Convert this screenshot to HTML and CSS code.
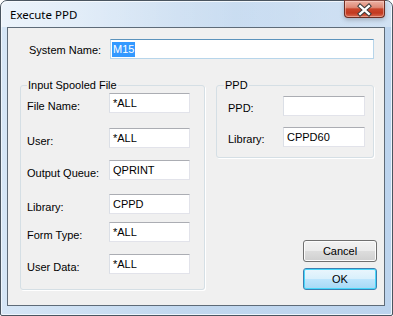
FILE: index.html
```html
<!DOCTYPE html>
<html>
<head>
<meta charset="utf-8">
<title>Execute PPD</title>
<link rel="stylesheet" href="styles.css">
</head>
<body>
<div class="window">
  <div class="titlebar">
    <span class="title">Execute PPD</span>
    <div class="close">
      <svg width="40" height="17" viewBox="0 0 40 17">
        <path d="M15.5 5 L24.5 13 M24.5 5 L15.5 13" stroke="#3a3a3a" stroke-width="4.4" stroke-linecap="square" fill="none"/>
        <path d="M15.5 5 L24.5 13 M24.5 5 L15.5 13" stroke="#ffffff" stroke-width="2.4" stroke-linecap="square" fill="none"/>
      </svg>
    </div>
  </div>
  <div class="client">
    <div class="sysrow">
      <span class="lbl sys-lbl">System Name:</span>
      <div class="input sys-input"><span class="sel">M15</span></div>
    </div>
    <div class="main">
      <fieldset class="group left-group">
        <legend>Input Spooled File</legend>
        <div class="row r1"><span class="lbl">File Name:</span><div class="input">*ALL</div></div>
        <div class="row r2"><span class="lbl">User:</span><div class="input">*ALL</div></div>
        <div class="row r3"><span class="lbl">Output Queue:</span><div class="input">QPRINT</div></div>
        <div class="row r4"><span class="lbl">Library:</span><div class="input">CPPD</div></div>
        <div class="row r5"><span class="lbl">Form Type:</span><div class="input">*ALL</div></div>
        <div class="row r6"><span class="lbl">User Data:</span><div class="input">*ALL</div></div>
      </fieldset>
      <div class="side">
        <fieldset class="group ppd-group">
          <legend>PPD</legend>
          <div class="row p1"><span class="lbl">PPD:</span><div class="input"></div></div>
          <div class="row p2"><span class="lbl">Library:</span><div class="input">CPPD60</div></div>
        </fieldset>
        <div class="buttons">
          <button class="btn">Cancel</button>
          <button class="btn default">OK</button>
        </div>
      </div>
    </div>
  </div>
</div>
</body>
</html>
```

FILE: styles.css
```css
html, body {
  margin: 0;
  padding: 0;
  background: #ffffff;
}

.window {
  box-sizing: border-box;
  width: 393px;
  height: 316px;
  border: 1px solid #4a5560;
  border-radius: 7px 7px 2px 2px;
  background: linear-gradient(to right, #d6e6f6 0%, #c2d8ef 45%, #bcd4ee 100%);
  box-shadow: inset 1px 1px 0 #eef5fc, inset -1px -1px 0 #eef5fc;
  padding: 0 7px 9px 6px;
  display: flex;
  flex-direction: column;
}

.titlebar {
  height: 26px;
  display: flex;
  align-items: flex-start;
  justify-content: space-between;
  background: linear-gradient(to right, rgba(255,255,255,0.55), rgba(255,255,255,0.15) 60%, rgba(255,255,255,0.3));
  margin: 0 -7px 0 -6px;
  padding: 0 7px 0 9px;
  border-radius: 6px 6px 0 0;
}

.title {
  font-family: "Noto Sans", "Open Sans", sans-serif;
  font-size: 11.5px;
  color: #000;
  line-height: 16px;
  margin-top: 6px;
}

.close {
  box-sizing: border-box;
  width: 41px;
  height: 18px;
  margin-top: -1px;
  border: 1px solid #6b2c22;
  border-top-color: #8a4a40;
  border-radius: 0 0 4px 4px;
  background: linear-gradient(to bottom, #ecb2a4 0%, #df8a77 40%, #c9452b 50%, #c2391f 75%, #d86b52 100%);
  box-shadow: inset 0 0 0 1px rgba(255,220,210,0.45), 0 2px 4px rgba(80,80,90,0.35);
  display: flex;
  align-items: center;
  justify-content: center;
}

.close svg {
  display: block;
}

.client {
  flex: 1;
  border: 1px solid #5e6b78;
  background: #f0f0f0;
  font-family: "Liberation Sans", Arial, sans-serif;
  font-size: 11px;
  color: #000;
  display: flex;
  flex-direction: column;
  padding: 11px 7px 15px 12px;
}

.sysrow {
  display: flex;
  align-items: center;
  height: 20px;
}

.sys-lbl {
  width: 81px;
  padding-left: 9px;
  padding-top: 1px;
}

.input {
  box-sizing: border-box;
  height: 20px;
  background: #ffffff;
  border: 1px solid #e2e3ea;
  border-top-color: #abadb3;
  border-left-color: #dbdfe6;
  padding: 2px 3px 0 3px;
  line-height: 14px;
  white-space: nowrap;
}

.sys-input {
  width: 264px;
  border-color: #b7d5ea;
  border-top-color: #5c93bc;
  padding-left: 1px;
}

.sel {
  display: inline-block;
  background: #3399ff;
  color: #ffffff;
  padding: 0 1px;
  line-height: 15px;
}

.main {
  flex: 1;
  display: flex;
  margin-top: 19px;
}

.group {
  margin: 0;
  padding: 0;
  border: 1px solid #d5dfe5;
  border-radius: 3px;
  box-shadow: 1px 1px 0 #ffffff;
  min-width: 0;
}

.group legend {
  padding: 0 1px;
  margin-left: 0;
  line-height: 15px;
}

.left-group {
  box-sizing: border-box;
  width: 185px;
  padding: 0 0 0 6px;
}

.row {
  display: flex;
  align-items: flex-start;
}

.row .lbl {
  width: 82px;
  padding-top: 7px;
}

.row .input {
  width: 81px;
}

.r1 { margin-top: 0; }
.r2 { margin-top: 15px; }
.r3 { margin-top: 12px; }
.r4 { margin-top: 14px; }
.r5 { margin-top: 8px; }
.r6 { margin-top: 12px; }

.side {
  flex: 1;
  margin-left: 11px;
  display: flex;
  flex-direction: column;
  align-items: flex-end;
}

.ppd-group {
  box-sizing: border-box;
  align-self: flex-start;
  width: 158px;
  height: 80px;
  padding: 0 0 0 11px;
}

.ppd-group legend {
  margin-left: -4px;
}

.ppd-group .lbl {
  width: 55px;
  padding-top: 6px;
}

.ppd-group .input {
  width: 82px;
}

.p1 { margin-top: 3px; }
.p2 { margin-top: 11px; }

.buttons {
  margin-top: auto;
  display: flex;
  flex-direction: column;
  gap: 6px;
}

.btn {
  box-sizing: border-box;
  width: 74px;
  height: 22px;
  border: 1px solid #707070;
  border-radius: 3px;
  background: linear-gradient(to bottom, #f2f2f2 0%, #ebebeb 48%, #dddddd 50%, #cfcfcf 100%);
  box-shadow: inset 0 0 0 1px #fcfcfc;
  font-family: "Liberation Sans", Arial, sans-serif;
  font-size: 11px;
  color: #000;
  padding: 0;
  line-height: 18px;
}

.btn.default {
  border-color: #3c7fb1;
  background: linear-gradient(to bottom, #eaf6fd 0%, #d9f0fc 48%, #bee6fd 50%, #a7d9f5 100%);
  box-shadow: inset 0 0 0 1px #48d8fb;
}
```
